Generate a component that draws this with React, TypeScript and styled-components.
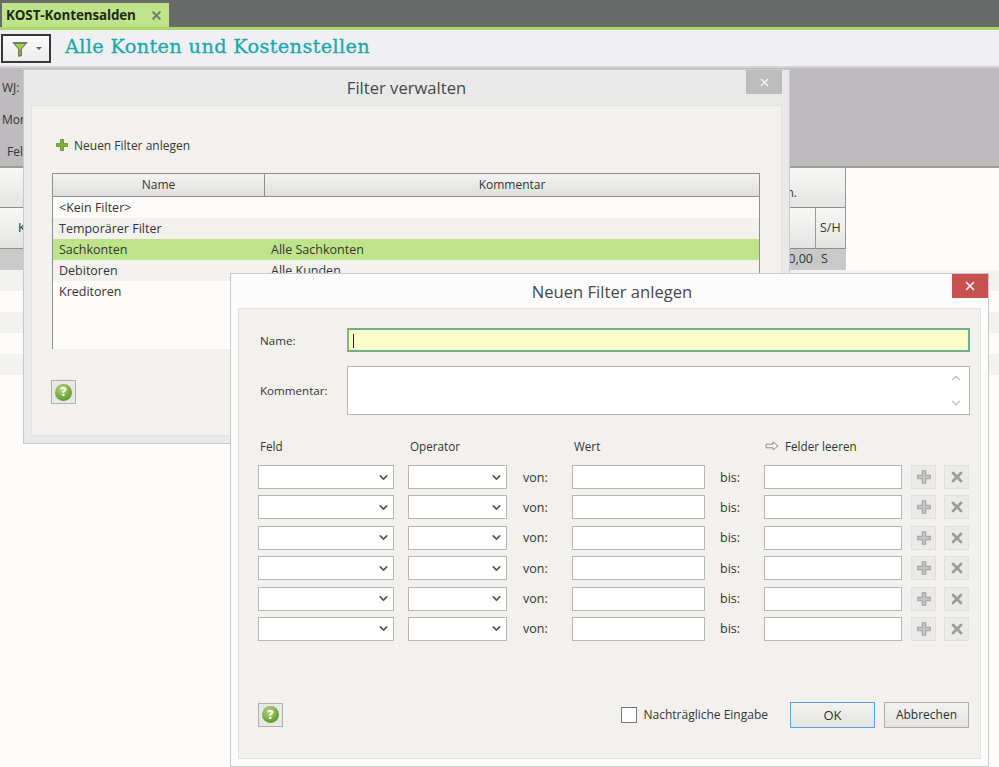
import React from "react";
import styled, { createGlobalStyle } from "styled-components";
import { ChevronDown, ChevronUp, X } from "lucide-react";

const GlobalStyle = createGlobalStyle`
  html, body { margin: 0; padding: 0; background: #fdfcfa; }
  body { font-family: "Open Sans", "Liberation Sans", sans-serif; font-size: 12px; color: #353535; }
  * { box-sizing: border-box; }
`;

const Desktop = styled.div`
  position: relative;
  width: 999px;
  height: 767px;
  overflow: hidden;
  background: #fdfcfa;
`;

const TabBar = styled.div`
  height: 30px;
  padding: 3px 0 0 2px;
  background: #676b69;
  border-bottom: 3px solid #a9d76c;
`;

const Tab = styled.div`
  width: 167px;
  height: 24px;
  padding: 0 6px 0 4px;
  display: flex;
  align-items: center;
  justify-content: space-between;
  background: #bfe38a;
  font-family: "Open Sans", sans-serif;
  font-weight: 700;
  font-size: 13.4px;
  letter-spacing: -0.1px;
  color: #1c2a14;
`;

const Toolbar = styled.div`
  height: 38px;
  padding: 4px 0 0 1px;
  display: flex;
  align-items: flex-start;
  gap: 14px;
  background: #f0f0f3;
  border-bottom: 2px solid #d4d4d6;
`;

const FilterButton = styled.div`
  width: 50px;
  height: 29px;
  display: flex;
  align-items: center;
  padding-left: 8px;
  gap: 7px;
  background: linear-gradient(#fbfbfb, #ececec);
  border: 2px solid #37373a;
`;

const Caret = styled.span`
  width: 0;
  height: 0;
  border-left: 3px solid transparent;
  border-right: 3px solid transparent;
  border-top: 3px solid #666;
`;

const PageTitle = styled.h1`
  margin: 0;
  font-family: "DejaVu Serif", serif;
  font-weight: 400;
  font-size: 19.3px;
  line-height: 26px;
  letter-spacing: 0.35px;
  -webkit-text-stroke: 0.3px #1aa9a9;
  color: #1aa9a9;
`;

const ParamPanel = styled.div`
  height: 100px;
  padding: 11px 0 0 2px;
  display: flex;
  flex-direction: column;
  gap: 14px;
  background: #bdbbbd;
  border-bottom: 2px solid #9d9c9d;
`;

const ParamLine = styled.div`
  width: 21px;
  height: 18px;
  line-height: 18px;
  display: flex;
  align-items: center;
  gap: 5px;
  white-space: nowrap;
  overflow: hidden;
`;

const BackTable = styled.div`
  width: 846px;
`;

const BackHeadTop = styled.div`
  height: 40px;
  padding: 16px 48px 0 0;
  text-align: right;
  background: linear-gradient(#f7f7f6, #e4e4e3);
  border-right: 1px solid #9a9a9a;
  border-bottom: 1px solid #8e8e8e;
`;

const BackHeadRow = styled.div`
  height: 40px;
  display: grid;
  grid-template-columns: 816px 30px;
`;

const BackHeadCell = styled.div<{ $pad?: number }>`
  padding-left: ${(p) => p.$pad ?? 4}px;
  line-height: 40px;
  font-size: 12.5px;
  background: linear-gradient(#f7f7f6, #e4e4e3);
  border-right: 1px solid #9a9a9a;
  border-bottom: 1px solid #8e8e8e;
`;

const BackDataRow = styled.div`
  height: 22px;
  display: grid;
  grid-template-columns: 816px 30px;
  line-height: 22px;
  background: #c9c9c9;
  font-size: 12.5px;
`;

const BackValue = styled.span<{ $right?: boolean }>`
  padding: ${(p) => (p.$right ? "0 3px 0 0" : "0 0 0 5px")};
  text-align: ${(p) => (p.$right ? "right" : "left")};
`;

const BackStripe = styled.div<{ $odd: boolean }>`
  height: 21px;
  background: ${(p) => (p.$odd ? "#f2f2f0" : "#fdfcfa")};
`;

const Dialog = styled.section<{ $x: number; $y: number; $w: number; $h: number; $bg: string }>`
  position: absolute;
  left: ${(p) => p.$x}px;
  top: ${(p) => p.$y}px;
  width: ${(p) => p.$w}px;
  height: ${(p) => p.$h}px;
  padding: 0 7px 7px;
  display: flex;
  flex-direction: column;
  background: ${(p) => p.$bg};
  border: 1px solid #c9c9c9;
`;

const TitleBar = styled.header<{ $h: number; $shift?: number }>`
  position: relative;
  height: ${(p) => p.$h}px;
  flex: none;
  display: flex;
  align-items: center;
  justify-content: center;
  padding-left: ${(p) => p.$shift ?? 0}px;
  font-size: 16.6px;
  color: #484848;
`;

const CloseBox = styled.div<{ $bg: string }>`
  position: absolute;
  right: ${(p) => (p.$bg === "#c75050" ? "-7px" : "0")};
  top: 0;
  width: 36px;
  height: 24px;
  display: flex;
  align-items: center;
  justify-content: center;
  color: #fff;
  background: ${(p) => p.$bg};
`;

const DialogBody = styled.div<{ $top: number; $right: number; $left: number }>`
  flex: 1;
  min-height: 0;
  padding: ${(p) => p.$top}px ${(p) => p.$right}px 0 ${(p) => p.$left}px;
  background: #f2f1ee;
  border: 1px solid #e2e2e0;
`;

const LinkLine = styled.div`
  height: 20px;
  margin-left: 3px;
  display: flex;
  align-items: center;
  gap: 5px;
`;

const ListTable = styled.div`
  width: 708px;
  height: 176px;
  margin-top: 18px;
  background: #fdfcfa;
  font-size: 12.5px;
  border-left: 1px solid #8f8f8f;
  border-right: 1px solid #8f8f8f;
`;

const ListHead = styled.div`
  height: 24px;
  display: grid;
  grid-template-columns: 212px 1fr;
  font-size: 12px;
  background: linear-gradient(#f4f4f3, #dfdfde);
  border-top: 1px solid #8f8f8f;
  border-bottom: 1px solid #8f8f8f;
`;

const ListHeadCell = styled.div<{ $first?: boolean }>`
  line-height: 22px;
  text-align: center;
  border-right: ${(p) => (p.$first ? "1px solid #8f8f8f" : "none")};
`;

const ListRow = styled.div<{ $tone: "plain" | "stripe" | "active" }>`
  height: 21px;
  display: grid;
  grid-template-columns: 212px 1fr;
  align-items: center;
  padding-left: 6px;
  background: ${(p) =>
    p.$tone === "active" ? "#bee48a" : p.$tone === "stripe" ? "#f2f1ed" : "#fdfcfa"};
`;

const HelpButton = styled.div<{ $top: number; $left: number }>`
  width: 25px;
  height: 24px;
  margin-top: ${(p) => p.$top}px;
  margin-left: ${(p) => p.$left}px;
  display: flex;
  align-items: center;
  justify-content: center;
  background: #e8e8e6;
  border: 1px solid #b0b0b0;
`;

const HelpBall = styled.span`
  width: 17px;
  height: 17px;
  border-radius: 50%;
  display: flex;
  align-items: center;
  justify-content: center;
  background: radial-gradient(circle at 40% 30%, #b5d67a, #5d9a2c 75%);
  color: #fff;
  font-weight: 800;
  font-size: 12px;
  line-height: 1;
`;

const FieldRow = styled.div<{ $top?: number }>`
  display: grid;
  grid-template-columns: 89px 623px;
  align-items: center;
  margin-top: ${(p) => p.$top ?? 0}px;
`;

const FieldLabel = styled.label`
  padding-left: 2px;
  font-size: 11.6px;
`;

const NameInput = styled.div`
  height: 24px;
  padding: 4px 0 0 4px;
  background: #fdfdc8;
  border: 2px solid #76ad7b;
  border-left-color: #8cbb58;
  box-shadow: inset 0 0 0 1px #e8f2fb;
`;

const Cursor = styled.div`
  width: 1px;
  height: 14px;
  background: #222;
`;

const CommentBox = styled.div`
  height: 49px;
  padding: 4px 6px;
  display: flex;
  flex-direction: column;
  align-items: flex-end;
  justify-content: space-between;
  color: #c5c5c5;
  background: #fff;
  border: 1px solid #b6b6b8;
`;

const FilterHead = styled.div`
  display: flex;
  height: 18px;
  margin: 22px 0 10px;
  font-size: 11.7px;
  line-height: 18px;
`;

const HeadText = styled.span<{ $w: number }>`
  width: ${(p) => p.$w}px;
  padding-left: 2px;
  display: flex;
  align-items: center;
  gap: 6px;
`;

const FilterRows = styled.div`
  display: flex;
  flex-direction: column;
  gap: 6.4px;
`;

const FilterRow = styled.div`
  display: flex;
  align-items: center;
  height: 24px;
`;

const Dropdown = styled.div<{ $w: number }>`
  width: ${(p) => p.$w}px;
  height: 24px;
  margin-right: 14px;
  padding-right: 3px;
  display: flex;
  align-items: center;
  justify-content: flex-end;
  color: #555;
  background: #fff;
  border: 1px solid #b6b6b8;
`;

const RangeLabel = styled.span<{ $w: number; $pad: number }>`
  width: ${(p) => p.$w}px;
  padding-left: ${(p) => p.$pad}px;
  font-size: 12.5px;
`;

const RangeInput = styled.div<{ $w: number }>`
  width: ${(p) => p.$w}px;
  height: 24px;
  background: #fff;
  border: 1px solid #b6b6b8;
`;

const RowButton = styled.div<{ $gap: number }>`
  width: 25px;
  height: 24px;
  margin-left: ${(p) => p.$gap}px;
  display: flex;
  align-items: center;
  justify-content: center;
  color: #9c9c9c;
  background: #ebeae9;
  border: 1px solid #e0e0df;
`;

const DialogFooter = styled.div`
  display: flex;
  align-items: center;
  height: 26px;
  margin-top: 61px;
`;

const CheckArea = styled.div`
  margin-left: auto;
  display: flex;
  align-items: center;
  gap: 6px;
  margin-right: 13px;
`;

const CheckBox = styled.span`
  width: 16px;
  height: 16px;
  background: #fff;
  border: 1px solid #777;
`;

const ActionButton = styled.button<{ $primary?: boolean }>`
  width: 85px;
  height: 26px;
  margin: 0 0 0 9px;
  padding: 0;
  font: inherit;
  font-size: ${(p) => (p.$primary ? 13 : 12)}px;
  color: #2f2f2f;
  background: linear-gradient(#f2f2f1, #e4e4e3);
  border: 1px solid ${(p) => (p.$primary ? "#5ea3dc" : "#adadad")};
  border-radius: 0;
`;

function FunnelIcon() {
  return (
    <svg width="18" height="18" viewBox="0 0 18 18">
      <path d="M1 2h16l-6 7v7l-4 1V9z" fill="#6f7d6c" />
      <path d="M4 4h10l-4.6 5.4V15l-.9.3V9.4z" fill="#a8cd3f" />
    </svg>
  );
}

function PlusIcon({ size, fill, stroke }: { size: number; fill: string; stroke: string }) {
  return (
    <svg width={size} height={size} viewBox="0 0 14 14">
      <path d="M5.5 1.5h3v4h4v3h-4v4h-3v-4h-4v-3h4z" fill={fill} stroke={stroke} strokeWidth="1" />
    </svg>
  );
}

function ArrowIcon() {
  return (
    <svg width="14" height="10" viewBox="0 0 14 10">
      <path d="M1 3.2h7V1l5 4-5 4V6.8H1z" fill="#f4f4f2" stroke="#8b8b8b" strokeWidth="1" />
    </svg>
  );
}

const filters = [
  { name: "<Kein Filter>", comment: "", tone: "plain" },
  { name: "Temporärer Filter", comment: "", tone: "stripe" },
  { name: "Sachkonten", comment: "Alle Sachkonten", tone: "active" },
  { name: "Debitoren", comment: "Alle Kunden", tone: "stripe" },
  { name: "Kreditoren", comment: "", tone: "plain" },
] as const;

const rowIds = [0, 1, 2, 3, 4, 5];
const stripes = [true, false, true, false, true];

export default function App(): React.ReactElement {
  return (
    <Desktop>
      <GlobalStyle />
      <TabBar>
        <Tab>
          KOST-Kontensalden
          <X size={13} strokeWidth={4} color="#757f6c" />
        </Tab>
      </TabBar>
      <Toolbar>
        <FilterButton>
          <FunnelIcon />
          <Caret />
        </FilterButton>
        <PageTitle>Alle Konten und Kostenstellen</PageTitle>
      </Toolbar>
      <ParamPanel>
        <ParamLine>WJ:</ParamLine>
        <ParamLine>Mon</ParamLine>
        <ParamLine>
          <ArrowIcon />
          Felder
        </ParamLine>
      </ParamPanel>
      <BackTable>
        <BackHeadTop>n.</BackHeadTop>
        <BackHeadRow>
          <BackHeadCell $pad={18}>K</BackHeadCell>
          <BackHeadCell $pad={4}>S/H</BackHeadCell>
        </BackHeadRow>
        <BackDataRow>
          <BackValue $right>0,00</BackValue>
          <BackValue>S</BackValue>
        </BackDataRow>
      </BackTable>
      {stripes.map((odd, i) => (
        <BackStripe key={i} $odd={odd} />
      ))}

      <Dialog $x={23} $y={69} $w={767} $h={375} $bg="#e9e9e9">
        <TitleBar $h={35}>
          Filter verwalten
          <CloseBox $bg="#bdbdbd">
            <X size={13} strokeWidth={2} />
          </CloseBox>
        </TitleBar>
        <DialogBody $top={29} $left={20} $right={20}>
          <LinkLine>
            <PlusIcon size={14} fill="#7eb043" stroke="#6a9c34" />
            Neuen Filter anlegen
          </LinkLine>
          <ListTable>
            <ListHead>
              <ListHeadCell $first>Name</ListHeadCell>
              <ListHeadCell>Kommentar</ListHeadCell>
            </ListHead>
            {filters.map((f) => (
              <ListRow key={f.name} $tone={f.tone}>
                <span>{f.name}</span>
                <span>{f.comment}</span>
              </ListRow>
            ))}
          </ListTable>
          <HelpButton $top={31} $left={-1}>
            <HelpBall>?</HelpBall>
          </HelpButton>
        </DialogBody>
      </Dialog>

      <Dialog $x={230} $y={273} $w={759} $h={494} $bg="#fcfcfc">
        <TitleBar $h={34} $shift={5}>
          Neuen Filter anlegen
          <CloseBox $bg="#c75050">
            <X size={14} strokeWidth={2.5} />
          </CloseBox>
        </TitleBar>
        <DialogBody $top={19} $left={19} $right={11}>
          <FieldRow>
            <FieldLabel>Name:</FieldLabel>
            <NameInput>
              <Cursor />
            </NameInput>
          </FieldRow>
          <FieldRow $top={14}>
            <FieldLabel>Kommentar:</FieldLabel>
            <CommentBox>
              <ChevronUp size={14} strokeWidth={2.5} />
              <ChevronDown size={14} strokeWidth={2.5} />
            </CommentBox>
          </FieldRow>
          <FilterHead>
            <HeadText $w={150}>Feld</HeadText>
            <HeadText $w={164}>Operator</HeadText>
            <HeadText $w={191}>Wert</HeadText>
            <HeadText $w={190}>
              <ArrowIcon />
              Felder leeren
            </HeadText>
          </FilterHead>
          <FilterRows>
            {rowIds.map((id) => (
              <FilterRow key={id}>
                <Dropdown $w={136}>
                  <ChevronDown size={13} strokeWidth={3} />
                </Dropdown>
                <Dropdown $w={99}>
                  <ChevronDown size={13} strokeWidth={3} />
                </Dropdown>
                <RangeLabel $w={51} $pad={2}>von:</RangeLabel>
                <RangeInput $w={133} />
                <RangeLabel $w={59} $pad={15}>bis:</RangeLabel>
                <RangeInput $w={138} />
                <RowButton $gap={9}>
                  <PlusIcon size={16} fill="#c4c4c3" stroke="#a3a3a3" />
                </RowButton>
                <RowButton $gap={8}>
                  <X size={16} strokeWidth={4} />
                </RowButton>
              </FilterRow>
            ))}
          </FilterRows>
          <DialogFooter>
            <HelpButton $top={0} $left={0}>
              <HelpBall>?</HelpBall>
            </HelpButton>
            <CheckArea>
              <CheckBox />
              Nachträgliche Eingabe
            </CheckArea>
            <ActionButton $primary>OK</ActionButton>
            <ActionButton>Abbrechen</ActionButton>
          </DialogFooter>
        </DialogBody>
      </Dialog>
    </Desktop>
  );
}
